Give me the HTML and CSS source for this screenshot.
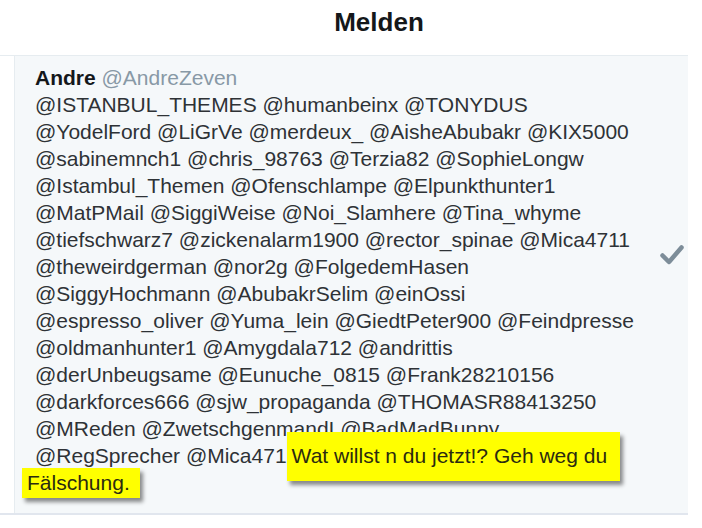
FILE: index.html
```html
<!DOCTYPE html>
<html lang="de">

<head>
    <meta charset="UTF-8">
    <title>Melden</title>
    <link rel="stylesheet" href="styles.css">
</head>

<body>

    <h1 class="title">Melden</h1>

    <div class="report">
        <div class="tweet">
            <div class="author"><b>Andre</b> <span class="handle">@AndreZeven</span></div>
            <div class="text">
                @ISTANBUL_THEMES @humanbeinx @TONYDUS<br>
                @YodelFord @LiGrVe @merdeux_ @AisheAbubakr @KIX5000<br>
                @sabinemnch1 @chris_98763 @Terzia82 @SophieLongw<br>
                @Istambul_Themen @Ofenschlampe @Elpunkthunter1<br>
                @MatPMail @SiggiWeise @Noi_Slamhere @Tina_whyme<br>
                @tiefschwarz7 @zickenalarm1900 @rector_spinae @Mica4711<br>
                @theweirdgerman @nor2g @FolgedemHasen<br>
                @SiggyHochmann @AbubakrSelim @einOssi<br>
                @espresso_oliver @Yuma_lein @GiedtPeter900 @Feindpresse<br>
                @oldmanhunter1 @Amygdala712 @andrittis<br>
                @derUnbeugsame @Eunuche_0815 @Frank28210156<br>
                @darkforces666 @sjw_propaganda @THOMASR88413250<br>
                @MReden @ZwetschgenmandI @BadMadBunny<br>
                @RegSprecher @Mica471<span class="note note-wide">Wat willst n du jetzt!? Geh weg du</span><br>
                <span class="note note-small">Fälschung.</span>
            </div>
        </div>
        <div class="check">
            <svg width="24" height="20" viewBox="0 0 24 20">
                <path d="M2.5 10.5 L9 17 L21.5 2.5" fill="none" stroke="#7d8d99" stroke-width="4.5" stroke-linejoin="round" stroke-linecap="round"/>
            </svg>
        </div>
    </div>

</body>

</html>
```

FILE: styles.css
```css
body {
    margin: 0;
    background: #fff;
    font-family: "Liberation Sans", Arial, sans-serif;
    color: #2e3236;
}

.title {
    margin: 0;
    height: 55px;
    line-height: 44px;
    font-size: 26px;
    font-weight: bold;
    text-align: center;
    padding-left: 56px;
    color: #14171a;
}

.report {
    display: flex;
    margin-right: 14px;
    border-top: 1px solid #e6ecf0;
    border-bottom: 2px solid #e1e6ee;
    height: 460px;
    box-sizing: border-box;
}

.tweet {
    flex: 1;
    margin-left: 14px;
    border-left: 1px solid #e6ecf0;
    background: #f5f8fa;
    padding: 8px 0 0 20px;
}

.author {
    font-size: 21px;
    line-height: 27px;
    color: #14171a;
}

.handle {
    color: #8899a6;
}

.text {
    font-size: 21px;
    line-height: 27px;
}

.note {
    background: #ffff00;
    color: #2b2b10;
    box-shadow: 3px 4px 4px rgba(0, 0, 0, 0.45);
    position: relative;
}

.note-wide {
    padding: 12px 13px 14px 5px;
    margin-left: 0;
}

.note-small {
    padding: 3px 10px 4px 5px;
    margin-left: -13px;
}

.check {
    width: 44px;
    background: #f5f8fa;
    display: flex;
    align-items: center;
    justify-content: center;
    padding: 0 0 60px 12px;
    box-sizing: border-box;
}
```
